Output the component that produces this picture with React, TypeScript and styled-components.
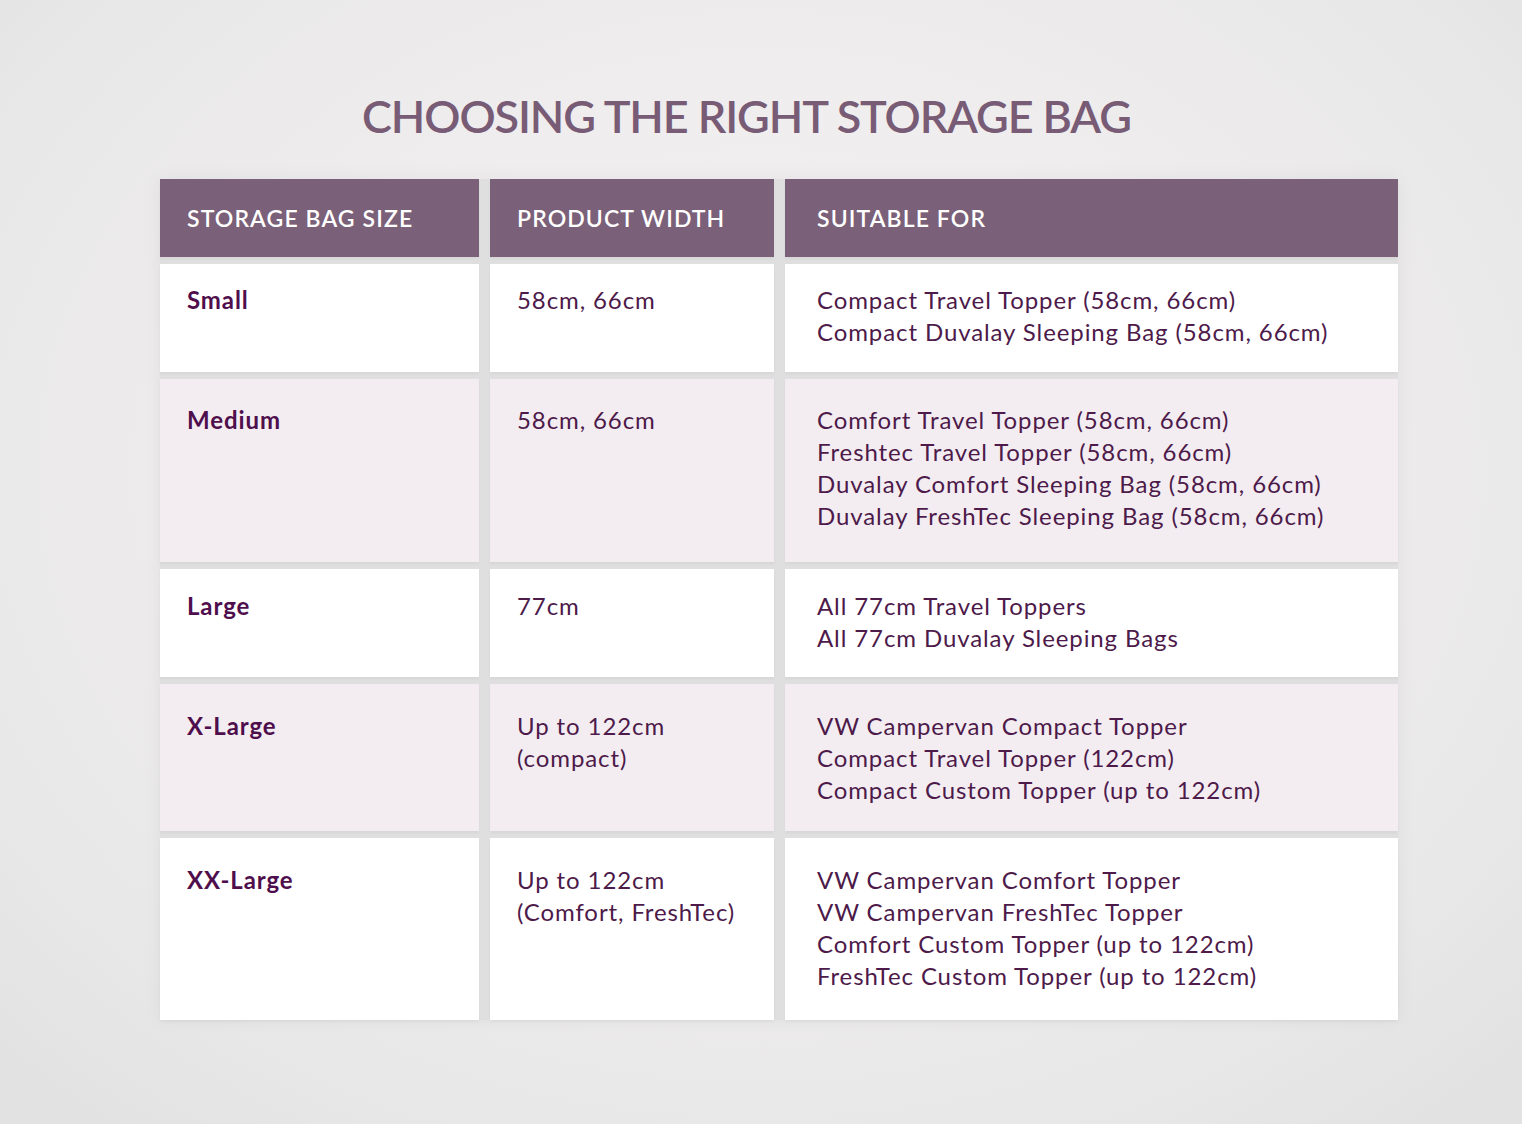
import React from "react";
import styled, { createGlobalStyle } from "styled-components";

const GlobalStyle = createGlobalStyle`
  html, body {
    margin: 0;
    padding: 0;
  }
  body {
    font-family: Lato, "Open Sans", Arial, sans-serif;
  }
`;

const Page = styled.main`
  min-height: 1124px;
  box-sizing: border-box;
  padding: 88px 0 0 160px;
  background: radial-gradient(
    ellipse 70% 75% at 50% 42%,
    #f3f1f2 0%,
    #efedee 45%,
    #e9e8e9 80%,
    #e3e2e3 100%
  );
`;

const Title = styled.h1`
  margin: 0 0 35px -160px;
  padding-right: 29px;
  text-align: center;
  font-family: Lato, "Open Sans", sans-serif;
  font-size: 45px;
  font-weight: 600;
  line-height: 56px;
  letter-spacing: -1.1px;
  color: #785b75;
`;

const Table = styled.div`
  display: grid;
  grid-template-columns: 319px 284px 613px;
  column-gap: 11px;
  row-gap: 7px;
  width: 1238px;
  background: #e0dfe0;
  box-shadow: 0 0 18px rgba(0, 0, 0, 0.05);
`;

const HeadCell = styled.div<{ $pad: number }>`
  display: flex;
  align-items: center;
  height: 78px;
  padding-left: ${({ $pad }) => $pad}px;
  padding-bottom: 1px;
  box-sizing: border-box;
  background: #7b6079;
  color: #ffffff;
  font-size: 23px;
  font-weight: 600;
  letter-spacing: 1.1px;
  box-shadow: 0 2px 3px rgba(0, 0, 0, 0.04);
`;

const Cell = styled.div<{ $pad: number; $top: number; $alt: boolean; $bold?: boolean; $h: number }>`
  box-sizing: border-box;
  height: ${({ $h }) => $h}px;
  padding: ${({ $top }) => $top}px 0 0 ${({ $pad }) => $pad}px;
  background: ${({ $alt }) => ($alt ? "#f3edf2" : "#ffffff")};
  color: ${({ $bold }) => ($bold ? "#4f0e4c" : "#4d1a4a")};
  font-size: 24px;
  font-weight: ${({ $bold }) => ($bold ? 700 : 400)};
  line-height: 32px;
  letter-spacing: 0.9px;
  box-shadow: 0 2px 3px rgba(0, 0, 0, 0.04);
`;

const Line = styled.div`
  white-space: nowrap;
`;

const pads = [27, 27, 32];
const headers = ["STORAGE BAG SIZE", "PRODUCT WIDTH", "SUITABLE FOR"];

const rows = [
  {
    size: "Small",
    width: ["58cm, 66cm"],
    suits: ["Compact Travel Topper (58cm, 66cm)", "Compact Duvalay Sleeping Bag (58cm, 66cm)"],
    height: 108,
    top: 20,
  },
  {
    size: "Medium",
    width: ["58cm, 66cm"],
    suits: [
      "Comfort Travel Topper (58cm, 66cm)",
      "Freshtec Travel Topper (58cm, 66cm)",
      "Duvalay Comfort Sleeping Bag (58cm, 66cm)",
      "Duvalay FreshTec Sleeping Bag (58cm, 66cm)",
    ],
    height: 183,
    top: 25,
  },
  {
    size: "Large",
    width: ["77cm"],
    suits: ["All 77cm Travel Toppers", "All 77cm Duvalay Sleeping Bags"],
    height: 108,
    top: 21,
  },
  {
    size: "X-Large",
    width: ["Up to 122cm", "(compact)"],
    suits: ["VW Campervan Compact Topper", "Compact Travel Topper (122cm)", "Compact Custom Topper (up to 122cm)"],
    height: 147,
    top: 26,
  },
  {
    size: "XX-Large",
    width: ["Up to 122cm", "(Comfort, FreshTec)"],
    suits: [
      "VW Campervan Comfort Topper",
      "VW Campervan FreshTec Topper",
      "Comfort Custom Topper (up to 122cm)",
      "FreshTec Custom Topper (up to 122cm)",
    ],
    height: 182,
    top: 26,
  },
];

export default function App() {
  return (
    <>
      <GlobalStyle />
      <Page>
        <Title>CHOOSING THE RIGHT STORAGE BAG</Title>
        <Table>
          {headers.map((h, i) => (
            <HeadCell key={h} $pad={pads[i]}>
              {h}
            </HeadCell>
          ))}
          {rows.map((r, idx) => {
            const alt = idx % 2 === 1;
            return (
              <React.Fragment key={r.size}>
                <Cell $pad={pads[0]} $top={r.top} $alt={alt} $bold $h={r.height}>
                  {r.size}
                </Cell>
                <Cell $pad={pads[1]} $top={r.top} $alt={alt} $h={r.height}>
                  {r.width.map((l) => (
                    <Line key={l}>{l}</Line>
                  ))}
                </Cell>
                <Cell $pad={pads[2]} $top={r.top} $alt={alt} $h={r.height}>
                  {r.suits.map((l) => (
                    <Line key={l}>{l}</Line>
                  ))}
                </Cell>
              </React.Fragment>
            );
          })}
        </Table>
      </Page>
    </>
  );
}
